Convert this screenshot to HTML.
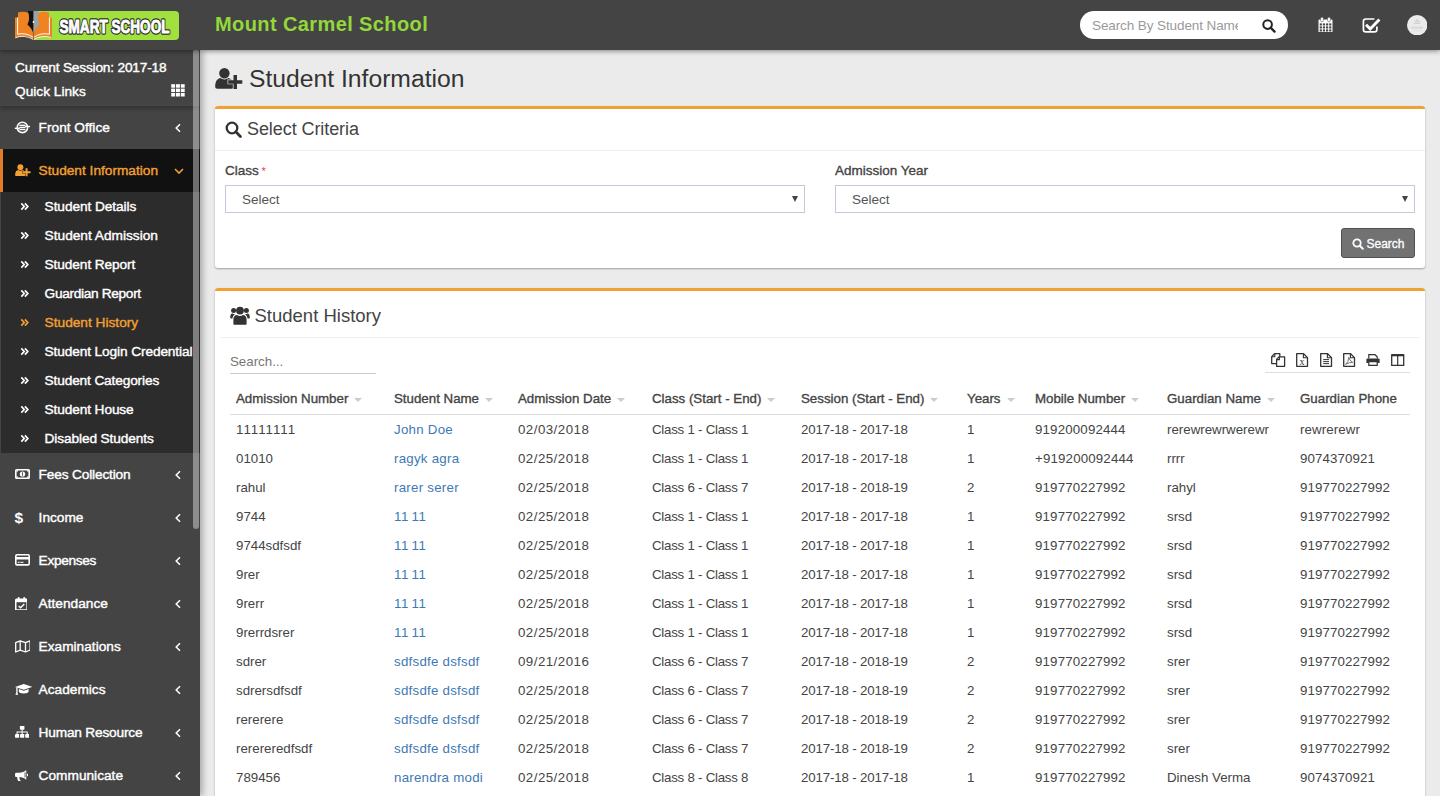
<!DOCTYPE html>
<html lang="en">
<head>
<meta charset="utf-8">
<title>Smart School - Student History</title>
<style>
*{box-sizing:border-box;margin:0;padding:0}
html,body{width:1440px;height:796px;overflow:hidden}
body{font-family:"Liberation Sans",Arial,sans-serif;font-size:14px;color:#333;background:#ebebeb;position:relative}
a{text-decoration:none;color:inherit}
svg{display:block}
/* header */
#hdr{position:absolute;left:0;top:0;width:1440px;height:50px;background:#444;z-index:30;box-shadow:0 1px 5px rgba(0,0,0,.45)}
#logo{position:absolute;left:14px;top:9px}
#school{position:absolute;left:215px;top:12px;font-size:20px;line-height:24px;font-weight:bold;color:#93d83a;letter-spacing:.4px;white-space:nowrap}
#tsearch{position:absolute;left:1080px;top:11px;width:208px;height:28px;background:#fff;border-radius:14px;overflow:hidden}
#tsearch span{position:absolute;left:12px;top:7px;width:146px;overflow:hidden;white-space:nowrap;font-size:13.5px;letter-spacing:-.1px;line-height:16px;color:#9a9a9a}
.hic{position:absolute}
/* sidebar */
#side{position:absolute;left:0;top:50px;width:200px;height:746px;background:#444;z-index:20;box-shadow:3px 0 6px rgba(0,0,0,.27);overflow:hidden}
#sess{position:absolute;left:0;top:0;width:200px;height:56px;background:#444;box-shadow:0 2px 5px rgba(0,0,0,.34);border-bottom:1px solid #484848;z-index:2;color:#fff;font-size:13.7px;-webkit-text-stroke:.4px #fff}
#sess div{position:absolute;left:15px;white-space:nowrap;line-height:16px}
#thumb{position:absolute;left:193px;top:0;width:6px;height:479px;background:rgba(242,242,242,.42);border-radius:2px 2px 4px 4px;z-index:5}
.mi{position:absolute;left:0;width:200px;height:43px;color:#fff;font-size:13.7px;-webkit-text-stroke:.4px currentColor}
.mi .t{position:absolute;left:38.6px;top:14px;line-height:16px;white-space:nowrap}
.mi .ic{position:absolute;left:14px;top:13px}
.mi .ar{position:absolute;left:174px;top:16.5px}
.mi.act{background:#111;border-left:3px solid #e07b28;color:#f2a033}
.mi.act .t{left:35.6px}.mi.act .ic{left:12px;top:15.3px}.mi.act .ar{left:170.5px;top:17.5px}
#sub{position:absolute;left:1px;top:142px;width:199px;height:261px;background:#2c2c2c}
.si{position:absolute;left:-1px;width:200px;height:29px;color:#fff;font-size:13.7px;-webkit-text-stroke:.4px currentColor}
.si .t{position:absolute;left:44.6px;top:7px;line-height:16px;white-space:nowrap}
.si .ch{position:absolute;left:20px;top:10.3px}
.si.on{color:#f2a033}
/* main */
#main{position:absolute;left:0;top:0;width:1440px;height:796px;overflow:hidden}
#ttl{position:absolute;left:249px;top:65px;font-size:24.7px;line-height:28px;color:#333;white-space:nowrap}
#ttlic{position:absolute;left:215px;top:68px}
.box{position:absolute;left:215px;width:1210px;background:#fff;border-radius:3px;box-shadow:0 1px 2px rgba(0,0,0,.32)}
.box .top{position:absolute;left:0;top:0;width:100%;height:3px;background:#f0a133;border-radius:3px 3px 0 0}
.hr{position:absolute;height:1px;background:#f0f0f0}
.abs{position:absolute}
.bh{position:absolute;left:0;top:0;width:100%;border-bottom:1px solid #f1f1f1}
.bh .t{position:absolute;font-size:18px;line-height:22px;color:#444;white-space:nowrap}
.lbl{position:absolute;font-size:13.5px;-webkit-text-stroke:.35px #444;color:#444;line-height:16px;white-space:nowrap}
.sel{position:absolute;width:580px;height:28px;border:1px solid #c3c9dc;background:#fff;font-size:13.5px;color:#555;line-height:28px;padding-left:16px}
.sel i{position:absolute;right:6px;top:10px;width:0;height:0;border-left:3px solid transparent;border-right:3px solid transparent;border-top:6px solid #444}
#sbtn{position:absolute;left:1126px;top:122px;width:74px;height:30px;background:#727272;border:1px solid #505050;border-radius:3px;color:#fff;font-size:12px;-webkit-text-stroke:.3px #fff;line-height:28px}
#sbtn span{position:absolute;left:24.5px;top:1px}
#sbtn svg{position:absolute;left:10px;top:8.5px}
table{position:absolute;left:15px;top:94px;border-collapse:collapse;table-layout:fixed;width:1180px}
th{height:32px;text-align:left;font-size:13.3px;font-weight:normal;-webkit-text-stroke:.35px #444;color:#444;border-bottom:1px solid #ddd;padding:2px 0 0 6px;white-space:nowrap;vertical-align:middle}
th i{display:inline-block;width:0;height:0;border-left:4px solid transparent;border-right:4px solid transparent;border-top:4px solid #ccc;margin-left:6px;vertical-align:1px}
td{height:29px;font-size:13.3px;color:#444;padding:2px 0 0 6px;white-space:nowrap;vertical-align:middle}
td a{color:#4179b5}
.c1,.c2{font-kerning:none}
.c2{letter-spacing:.25px}.c3{letter-spacing:.47px}.c4{letter-spacing:-.25px}.c5{letter-spacing:-.15px}.c7{letter-spacing:.16px}.c9{letter-spacing:.1px}
</style>
</head>
<body>
<div id="hdr">
  <div id="logo"><svg width="170" height="34" viewBox="0 0 170 34">
    <path d="M20 2 H161 Q165 2 165 6 V27 Q165 31 161 31 H20 Z" fill="#a2e03f"/>
    <path d="M1 8.5 L4 8.5 L4 3.4 Q9 2.2 13.5 3.6 Q17.5 5 19.3 8 L19.3 30.6 Q15 27 9 27.2 Q4 27.4 1 29.4 Z" fill="#ef8223"/>
    <path d="M38 8.5 L35 8.5 L35 3.4 Q30 2.2 25.5 3.6 Q21.5 5 19.7 8 L19.7 30.6 Q24 27 30 27.2 Q35 27.4 38 29.4 Z" fill="#ef8223"/>
    <path d="M3.6 8.5 V25.2 Q12 23.4 19 28.2" fill="none" stroke="#fff" stroke-width="1"/>
    <path d="M35.4 8.5 V25.2 Q27 23.4 20 28.2" fill="none" stroke="#fff" stroke-width="1"/>
    <path d="M1.6 28.6 Q10 25.4 19.2 30.4" fill="none" stroke="#fff" stroke-width=".8"/>
    <path d="M37.4 28.6 Q29 25.4 19.8 30.4" fill="none" stroke="#fff" stroke-width=".8"/>
    <path d="M14 2 H19.5 V25 Q18 19 13.4 15.4 Q16.4 10.5 14 2 Z" fill="#111"/>
    <path d="M25 2 H19.5 V25 Q21 19 25.6 15.4 Q22.6 10.5 25 2 Z" fill="#9aa3a3"/>
    <circle cx="19.5" cy="13" r=".9" fill="#fff"/>
    <text x="100.5" y="23.6" text-anchor="middle" textLength="110" lengthAdjust="spacingAndGlyphs" font-family="Liberation Sans, Arial, sans-serif" font-weight="bold" font-size="19" fill="#2d2d2d" stroke="#2d2d2d" stroke-width="3.4" stroke-linejoin="round">SMART SCHOOL</text>
    <text x="100.5" y="23.6" text-anchor="middle" textLength="110" lengthAdjust="spacingAndGlyphs" font-family="Liberation Sans, Arial, sans-serif" font-weight="bold" font-size="19" fill="#fff" stroke="#fff" stroke-width=".9" stroke-linejoin="round">SMART SCHOOL</text>
  </svg></div>
  <div id="school">Mount Carmel School</div>
  <div id="tsearch"><span>Search By Student Name</span></div>
  <svg class="hic" style="left:1262px;top:19px" width="14" height="14" viewBox="0 0 14 14"><circle cx="5.6" cy="5.6" r="4.3" fill="none" stroke="#222" stroke-width="2"/><path d="M8.8 8.8 L12.6 12.6" stroke="#222" stroke-width="2.3" stroke-linecap="round"/></svg>
  <svg class="hic" style="left:1318px;top:16.8px" width="15" height="15.6" viewBox="0 0 15 15.6"><path d="M0.5 3.6 Q0.5 2.6 1.5 2.6 H13.5 Q14.5 2.6 14.5 3.6 V14.4 Q14.5 15.4 13.5 15.4 H1.5 Q0.5 15.4 0.5 14.4 Z" fill="#fff"/><rect x="2.6" y="0.2" width="2.8" height="4.6" rx="1.3" fill="#fff" stroke="#444" stroke-width=".5"/><rect x="9.6" y="0.2" width="2.8" height="4.6" rx="1.3" fill="#fff" stroke="#444" stroke-width=".5"/><g fill="#444"><rect x="1.7" y="6.4" width="2.2" height="2.1"/><rect x="4.85" y="6.4" width="2.2" height="2.1"/><rect x="8" y="6.4" width="2.2" height="2.1"/><rect x="11.15" y="6.4" width="2.2" height="2.1"/><rect x="1.7" y="9.4" width="2.2" height="2.1"/><rect x="4.85" y="9.4" width="2.2" height="2.1"/><rect x="8" y="9.4" width="2.2" height="2.1"/><rect x="11.15" y="9.4" width="2.2" height="2.1"/><rect x="1.7" y="12.4" width="2.2" height="2.1"/><rect x="4.85" y="12.4" width="2.2" height="2.1"/><rect x="8" y="12.4" width="2.2" height="2.1"/><rect x="11.15" y="12.4" width="2.2" height="2.1"/></g></svg>
  <svg class="hic" style="left:1361.5px;top:16.5px" width="19" height="16.5" viewBox="0 0 19 16.5"><path d="M14.9 9.4 V12.4 Q14.9 14.8 12.5 14.8 H3.8 Q1.4 14.8 1.4 12.4 V4.4 Q1.4 2 3.8 2 H12.4" fill="none" stroke="#fff" stroke-width="1.7"/><path d="M4 7.8 L8.2 11.9 L17.4 2.6" fill="none" stroke="#fff" stroke-width="2.9"/></svg>
  <svg class="hic" style="left:1407px;top:15px" width="20.4" height="20.4" viewBox="0 0 20.4 20.4"><circle cx="10.2" cy="10.2" r="10.2" fill="#ebebeb"/><circle cx="10.2" cy="5.6" r="1.3" fill="#d2d2d2"/><circle cx="8" cy="6.4" r="1" fill="#d8d8d8"/><circle cx="12.4" cy="6.4" r="1" fill="#d8d8d8"/><path d="M6.2 9 Q10.2 5.6 14.2 9 Z" fill="#d2d2d2"/><rect x="4.4" y="11.6" width="11.6" height="2.2" fill="#dadada"/><rect x="6.2" y="15.4" width="8" height=".7" fill="#dcdcdc"/></svg>
</div>
<div id="side">
  <div id="sess"><div style="top:10px;letter-spacing:-.19px">Current Session: 2017-18</div><div style="top:34px">Quick Links</div><svg style="position:absolute;left:171px;top:34px" width="14" height="13" viewBox="0 0 14 13"><g fill="#fff"><rect x="0.2" y="0.2" width="3.9" height="3.5"/><rect x="5" y="0.2" width="3.9" height="3.5"/><rect x="9.8" y="0.2" width="3.9" height="3.5"/><rect x="0.2" y="4.6" width="3.9" height="3.5"/><rect x="5" y="4.6" width="3.9" height="3.5"/><rect x="9.8" y="4.6" width="3.9" height="3.5"/><rect x="0.2" y="9" width="3.9" height="3.5"/><rect x="5" y="9" width="3.9" height="3.5"/><rect x="9.8" y="9" width="3.9" height="3.5"/></g></svg></div>
  <div class="mi" style="top:56px"><span class="ic"><svg width="16" height="16" viewBox="0 0 16 16"><circle cx="8.4" cy="8.4" r="5.2" fill="none" stroke="#fff" stroke-width="1.6"/><rect x="0.8" y="8.6" width="5" height="1.4" fill="#fff"/><rect x="11" y="6.8" width="5" height="1.4" fill="#fff"/><rect x="5.4" y="5.6" width="6" height="1.4" fill="#fff"/><rect x="5.4" y="7.7" width="6" height="1.4" fill="#fff"/><rect x="5.4" y="9.8" width="6" height="1.4" fill="#fff"/></svg></span><span class="t">Front Office</span><span class="ar"><svg width="8" height="10" viewBox="0 0 8 10"><path d="M6 1.2 L2.2 5 L6 8.8" fill="none" stroke="#fff" stroke-width="1.5"/></svg></span></div>
  <div class="mi act" style="top:99px"><span class="ic"><svg width="16" height="13" viewBox="0 0 28 22"><circle cx="9.4" cy="5.2" r="5.2" fill="#f2a033"/><path d="M0.2 18.8 C0.2 13 2.6 10.4 5.6 10 C6.8 11 8 11.4 9.4 11.4 C10.8 11.4 12 11 13.2 10 C16.2 10.4 18.6 13 18.6 18.8 C18.6 20 17.8 20.8 16.6 20.8 H2.2 C1 20.8 0.2 20 0.2 18.8 Z" fill="#f2a033"/><path d="M18.5 7 h3.5 v5.2 h5.3 v3.5 h-5.3 v5.3 h-3.5 v-5.3 h-5.3 v-3.5 h5.3 Z" fill="#f2a033" stroke="#111" stroke-width="1.3" paint-order="stroke"/></svg></span><span class="t">Student Information</span><span class="ar"><svg width="10" height="8" viewBox="0 0 10 8"><path d="M1 2 L5 6 L9 2" fill="none" stroke="#f2a033" stroke-width="1.6"/></svg></span></div>
  <div id="sub">
    <div class="si" style="top:0px"><span class="ch"><svg width="9" height="9" viewBox="0 0 9 9"><path d="M1.3 1.4 L4.2 4.5 L1.3 7.6 M4.9 1.4 L7.8 4.5 L4.9 7.6" fill="none" stroke="#fff" stroke-width="1.7"/></svg></span><span class="t" style="letter-spacing:-.08px">Student Details</span></div>
    <div class="si" style="top:29px"><span class="ch"><svg width="9" height="9" viewBox="0 0 9 9"><path d="M1.3 1.4 L4.2 4.5 L1.3 7.6 M4.9 1.4 L7.8 4.5 L4.9 7.6" fill="none" stroke="#fff" stroke-width="1.7"/></svg></span><span class="t">Student Admission</span></div>
    <div class="si" style="top:58px"><span class="ch"><svg width="9" height="9" viewBox="0 0 9 9"><path d="M1.3 1.4 L4.2 4.5 L1.3 7.6 M4.9 1.4 L7.8 4.5 L4.9 7.6" fill="none" stroke="#fff" stroke-width="1.7"/></svg></span><span class="t" style="letter-spacing:-.1px">Student Report</span></div>
    <div class="si" style="top:87px"><span class="ch"><svg width="9" height="9" viewBox="0 0 9 9"><path d="M1.3 1.4 L4.2 4.5 L1.3 7.6 M4.9 1.4 L7.8 4.5 L4.9 7.6" fill="none" stroke="#fff" stroke-width="1.7"/></svg></span><span class="t" style="letter-spacing:-.33px">Guardian Report</span></div>
    <div class="si on" style="top:116px"><span class="ch"><svg width="9" height="9" viewBox="0 0 9 9"><path d="M1.3 1.4 L4.2 4.5 L1.3 7.6 M4.9 1.4 L7.8 4.5 L4.9 7.6" fill="none" stroke="#f2a033" stroke-width="1.7"/></svg></span><span class="t">Student History</span></div>
    <div class="si" style="top:145px"><span class="ch"><svg width="9" height="9" viewBox="0 0 9 9"><path d="M1.3 1.4 L4.2 4.5 L1.3 7.6 M4.9 1.4 L7.8 4.5 L4.9 7.6" fill="none" stroke="#fff" stroke-width="1.7"/></svg></span><span class="t" style="letter-spacing:-.12px">Student Login Credential</span></div>
    <div class="si" style="top:174px"><span class="ch"><svg width="9" height="9" viewBox="0 0 9 9"><path d="M1.3 1.4 L4.2 4.5 L1.3 7.6 M4.9 1.4 L7.8 4.5 L4.9 7.6" fill="none" stroke="#fff" stroke-width="1.7"/></svg></span><span class="t" style="letter-spacing:-.15px">Student Categories</span></div>
    <div class="si" style="top:203px"><span class="ch"><svg width="9" height="9" viewBox="0 0 9 9"><path d="M1.3 1.4 L4.2 4.5 L1.3 7.6 M4.9 1.4 L7.8 4.5 L4.9 7.6" fill="none" stroke="#fff" stroke-width="1.7"/></svg></span><span class="t" style="letter-spacing:-.12px">Student House</span></div>
    <div class="si" style="top:232px"><span class="ch"><svg width="9" height="9" viewBox="0 0 9 9"><path d="M1.3 1.4 L4.2 4.5 L1.3 7.6 M4.9 1.4 L7.8 4.5 L4.9 7.6" fill="none" stroke="#fff" stroke-width="1.7"/></svg></span><span class="t" style="letter-spacing:-.12px">Disabled Students</span></div>
  </div>
  <div class="mi" style="top:403px"><svg class="abs" style="left:14.5px;top:16px" width="15" height="10" viewBox="0 0 15 10"><rect x="0.8" y="0.8" width="13.4" height="8.4" rx=".8" fill="none" stroke="#fff" stroke-width="1.6"/><ellipse cx="7.5" cy="5" rx="2.7" ry="2.6" fill="#fff"/><rect x="7.05" y="3.3" width=".9" height="3.4" fill="#444"/><rect x="1.4" y="1.4" width="1.6" height="1.2" fill="#fff"/><rect x="12" y="1.4" width="1.6" height="1.2" fill="#fff"/><rect x="1.4" y="7.4" width="1.6" height="1.2" fill="#fff"/><rect x="12" y="7.4" width="1.6" height="1.2" fill="#fff"/></svg><span class="t" style="letter-spacing:-0.16px">Fees Collection</span><span class="ar"><svg width="8" height="10" viewBox="0 0 8 10"><path d="M6 1.2 L2.2 5 L6 8.8" fill="none" stroke="#fff" stroke-width="1.5"/></svg></span></div>
  <div class="mi" style="top:446px"><svg class="abs" style="left:14px;top:13px" width="11" height="17" viewBox="0 0 11 17"><text x="0.6" y="13.6" font-family="Liberation Sans, sans-serif" font-weight="bold" font-size="15.5" fill="#fff">$</text></svg><span class="t">Income</span><span class="ar"><svg width="8" height="10" viewBox="0 0 8 10"><path d="M6 1.2 L2.2 5 L6 8.8" fill="none" stroke="#fff" stroke-width="1.5"/></svg></span></div>
  <div class="mi" style="top:489px"><svg class="abs" style="left:14.5px;top:15.4px" width="15" height="11.7" viewBox="0 0 15 11.7"><rect x="0.8" y="0.8" width="13.4" height="10.1" rx="1.2" fill="none" stroke="#fff" stroke-width="1.6"/><rect x="1" y="3" width="13" height="2.5" fill="#fff"/><rect x="2.8" y="7.8" width="1.8" height="1.1" fill="#fff"/><rect x="5.4" y="7.8" width="3" height="1.1" fill="#fff"/></svg><span class="t" style="letter-spacing:-0.33px">Expenses</span><span class="ar"><svg width="8" height="10" viewBox="0 0 8 10"><path d="M6 1.2 L2.2 5 L6 8.8" fill="none" stroke="#fff" stroke-width="1.5"/></svg></span></div>
  <div class="mi" style="top:532px"><svg class="abs" style="left:14.5px;top:14.5px" width="12.9" height="13.8" viewBox="0 0 12.9 13.8"><rect x="0.75" y="2.2" width="11.4" height="10.85" rx=".8" fill="none" stroke="#fff" stroke-width="1.5"/><rect x="0.75" y="2.2" width="11.4" height="3" fill="#fff"/><rect x="2.7" y="0" width="1.9" height="3.8" rx=".9" fill="#fff"/><rect x="8.3" y="0" width="1.9" height="3.8" rx=".9" fill="#fff"/><path d="M3.6 8.9 L5.6 10.8 L9.3 7" fill="none" stroke="#fff" stroke-width="1.4"/></svg><span class="t">Attendance</span><span class="ar"><svg width="8" height="10" viewBox="0 0 8 10"><path d="M6 1.2 L2.2 5 L6 8.8" fill="none" stroke="#fff" stroke-width="1.5"/></svg></span></div>
  <div class="mi" style="top:575px"><svg class="abs" style="left:14.5px;top:14.9px" width="15.8" height="12.8" viewBox="0 0 15.8 12.8"><path d="M0.7 2.7 L5.2 0.8 L10.5 2.7 L15.1 0.8 V10.1 L10.5 12 L5.2 10.1 L0.7 12 Z M5.2 0.8 V10.1 M10.5 2.7 V12" fill="none" stroke="#fff" stroke-width="1.3" stroke-linejoin="round"/></svg><span class="t">Examinations</span><span class="ar"><svg width="8" height="10" viewBox="0 0 8 10"><path d="M6 1.2 L2.2 5 L6 8.8" fill="none" stroke="#fff" stroke-width="1.5"/></svg></span></div>
  <div class="mi" style="top:618px"><svg class="abs" style="left:14.5px;top:15.7px" width="17.5" height="11.2" viewBox="0.4 2 17.2 12.4" preserveAspectRatio="none"><path d="M9 2 L17.6 5.2 L9 8.4 L0.4 5.2 Z" fill="#fff"/><path d="M4.2 7.6 L9 9.5 L13.8 7.6 V10.2 C13.8 11.6 11.6 12.4 9 12.4 C6.4 12.4 4.2 11.6 4.2 10.2 Z" fill="#fff"/><path d="M2 5.8 V11 L1.2 14 H3 L2.6 11 V6" fill="#fff" stroke="#fff" stroke-width=".6"/></svg><span class="t">Academics</span><span class="ar"><svg width="8" height="10" viewBox="0 0 8 10"><path d="M6 1.2 L2.2 5 L6 8.8" fill="none" stroke="#fff" stroke-width="1.5"/></svg></span></div>
  <div class="mi" style="top:661px"><svg class="abs" style="left:14.5px;top:15.4px" width="14.3" height="11.8" viewBox="0.4 1.4 15.2 13.2" preserveAspectRatio="none"><rect x="5.6" y="1.4" width="4.8" height="4.2" rx=".5" fill="#fff"/><rect x="0.4" y="10.4" width="4.4" height="4.2" rx=".5" fill="#fff"/><rect x="5.8" y="10.4" width="4.4" height="4.2" rx=".5" fill="#fff"/><rect x="11.2" y="10.4" width="4.4" height="4.2" rx=".5" fill="#fff"/><path d="M8 5 V10.6 M2.6 10.6 V8 H13.4 V10.6" fill="none" stroke="#fff" stroke-width="1.1"/></svg><span class="t" style="letter-spacing:-0.2px">Human Resource</span><span class="ar"><svg width="8" height="10" viewBox="0 0 8 10"><path d="M6 1.2 L2.2 5 L6 8.8" fill="none" stroke="#fff" stroke-width="1.5"/></svg></span></div>
  <div class="mi" style="top:704px"><svg class="abs" style="left:14.5px;top:15.6px" width="13.7" height="11.7" viewBox="0.6 1.2 15.8 13.8" preserveAspectRatio="none"><path d="M13.6 1.2 C11.4 3.4 8.6 4.4 5.4 4.4 H2.2 C1.3 4.4 0.6 5.1 0.6 6 V8 C0.6 8.9 1.3 9.6 2.2 9.6 H5.4 C8.6 9.6 11.4 10.6 13.6 12.8 Z" fill="#fff"/><path d="M3.2 9.6 H5.8 C5.6 11.4 6.2 12.8 7.4 14 C6.8 14.9 5.4 15 4.4 14.4 C3.6 12.9 3 11.4 3.2 9.6 Z" fill="#fff"/><path d="M14.4 5.4 C15.6 5.6 16.4 6.2 16.4 7 C16.4 7.8 15.6 8.4 14.4 8.6 Z" fill="#fff"/><path d="M12.2 4 V10" stroke="#444" stroke-width="1"/></svg><span class="t">Communicate</span><span class="ar"><svg width="8" height="10" viewBox="0 0 8 10"><path d="M6 1.2 L2.2 5 L6 8.8" fill="none" stroke="#fff" stroke-width="1.5"/></svg></span></div>
  <div id="thumb"></div>
</div>
<div id="main">
  <div id="ttlic"><svg width="28" height="22" viewBox="0 0 28 22"><circle cx="9.4" cy="5.2" r="5.2" fill="#333"/><path d="M0.2 18.8 C0.2 13 2.6 10.4 5.6 10 C6.8 11 8 11.4 9.4 11.4 C10.8 11.4 12 11 13.2 10 C16.2 10.4 18.6 13 18.6 18.8 C18.6 20 17.8 20.8 16.6 20.8 H2.2 C1 20.8 0.2 20 0.2 18.8 Z" fill="#333"/><path d="M18.5 7 h3.5 v5.2 h5.3 v3.5 h-5.3 v5.3 h-3.5 v-5.3 h-5.3 v-3.5 h5.3 Z" fill="#333" stroke="#ebebeb" stroke-width="1.3" paint-order="stroke"/></svg></div>
  <div id="ttl">Student Information</div>

  <div class="box" style="top:106px;height:162px">
    <div class="top"></div>
    <svg class="abs" style="left:10px;top:15px" width="17" height="17" viewBox="0 0 17 17"><circle cx="7" cy="7" r="5.3" fill="none" stroke="#333" stroke-width="2.3"/><path d="M10.8 10.8 L15.4 15.4" stroke="#333" stroke-width="2.8" stroke-linecap="round"/></svg>
    <div class="abs" style="left:32px;top:12px;font-size:18px;line-height:22px;color:#444;white-space:nowrap;letter-spacing:-.08px">Select Criteria</div>
    <div class="hr" style="left:0;top:44px;width:1210px"></div>
    <div class="lbl" style="left:10px;top:57px">Class <span style="color:#e8384f;-webkit-text-stroke:0;font-size:11px;position:relative;top:0;left:-1px">*</span></div>
    <div class="lbl" style="left:620px;top:57px">Admission Year</div>
    <div class="sel" style="left:10px;top:79px">Select<i></i></div>
    <div class="sel" style="left:620px;top:79px">Select<i></i></div>
    <div id="sbtn"><svg width="12" height="12" viewBox="0 0 12 12"><circle cx="5" cy="5" r="3.7" fill="none" stroke="#fff" stroke-width="1.8"/><path d="M7.8 7.8 L10.8 10.8" stroke="#fff" stroke-width="2" stroke-linecap="round"/></svg><span>Search</span></div>
  </div>

  <div class="box" style="top:288px;height:520px">
    <div class="top"></div>
    <svg class="abs" style="left:15px;top:18px" width="20" height="19" viewBox="0 0 20 19"><circle cx="10" cy="4.6" r="3.9" fill="#333"/><circle cx="3.6" cy="4.4" r="2.5" fill="#333"/><circle cx="16.4" cy="4.4" r="2.5" fill="#333"/><path d="M3.4 17.8 V13.6 C3.4 10.6 5 9 7 9 C7.8 9.7 8.8 10.1 10 10.1 C11.2 10.1 12.2 9.7 13 9 C15 9 16.6 10.6 16.6 13.6 V17.8 C16.6 18.4 16.2 18.8 15.6 18.8 H4.4 C3.8 18.8 3.4 18.4 3.4 17.8 Z" fill="#333"/><path d="M0.2 11.6 C0.2 8.8 1.2 7.6 2.4 7.6 C3.2 8.2 4.2 8.4 5.2 8.2 C3.6 9.2 2.6 10.6 2.4 12.4 H1 C0.5 12.4 0.2 12.1 0.2 11.6 Z" fill="#333"/><path d="M19.8 11.6 C19.8 8.8 18.8 7.6 17.6 7.6 C16.8 8.2 15.8 8.4 14.8 8.2 C16.4 9.2 17.4 10.6 17.6 12.4 H19 C19.5 12.4 19.8 12.1 19.8 11.6 Z" fill="#333"/></svg>
    <div class="abs" style="left:39.5px;top:16.8px;font-size:18.5px;line-height:22px;color:#444;white-space:nowrap">Student History</div>
    <div class="hr" style="left:5px;top:49px;width:1200px"></div>
    <div class="abs" style="left:15px;top:66px;font-size:13.3px;line-height:16px;color:#777;white-space:nowrap">Search...</div>
    <div class="abs" style="left:15px;top:85px;width:146px;height:1px;background:#ccc"></div>
    <div class="abs" style="left:1050px;top:84px;width:145px;height:1px;background:#ddd"></div>
    <div id="exp" class="abs" style="left:1000px;top:0">
    <svg class="abs" style="left:55.8px;top:65px" width="15" height="14" viewBox="0 0 15 14"><path d="M3.6 0.7 H8.8 V10.6 H0.7 V3.6 Z" fill="#fff" stroke="#333" stroke-width="1.3" stroke-linejoin="round"/><path d="M3.8 0.9 V3.8 H0.9" fill="none" stroke="#333" stroke-width="1.1"/><path d="M8.2 3.8 H13.6 V13.3 H5.6 V6.4 Z" fill="#fff" stroke="#333" stroke-width="1.3" stroke-linejoin="round"/><path d="M8.4 4 V6.6 H5.8" fill="none" stroke="#333" stroke-width="1.1"/></svg>
    <svg class="abs" style="left:81px;top:65px" width="13" height="14" viewBox="0 0 13 14"><path d="M0.7 0.7 H7.6 L11.5 4.6 V13.3 H0.7 Z" fill="#fff" stroke="#333" stroke-width="1.3" stroke-linejoin="round"/><path d="M7.4 0.9 V4.8 H11.3" fill="none" stroke="#333" stroke-width="1.1"/><text x="6" y="11.6" text-anchor="middle" font-family="Liberation Serif, serif" font-size="10" fill="#333">x</text></svg>
    <svg class="abs" style="left:104.6px;top:65px" width="13" height="14" viewBox="0 0 13 14"><path d="M0.7 0.7 H7.6 L11.5 4.6 V13.3 H0.7 Z" fill="#fff" stroke="#333" stroke-width="1.3" stroke-linejoin="round"/><path d="M7.4 0.9 V4.8 H11.3" fill="none" stroke="#333" stroke-width="1.1"/><path d="M3.2 6.6 H9 M3.2 8.6 H9 M3.2 10.6 H9" stroke="#333" stroke-width="1"/></svg>
    <svg class="abs" style="left:127.8px;top:65px" width="13" height="14" viewBox="0 0 13 14"><path d="M0.7 0.7 H7.6 L11.5 4.6 V13.3 H0.7 Z" fill="#fff" stroke="#333" stroke-width="1.3" stroke-linejoin="round"/><path d="M7.4 0.9 V4.8 H11.3" fill="none" stroke="#333" stroke-width="1.1"/><path d="M2.6 11.4 Q5.4 9.4 5.8 4.4 Q6.2 7.6 9.8 9.4 Q6 9.2 2.6 11.4 Z" fill="none" stroke="#555" stroke-width=".8"/></svg>
    <svg class="abs" style="left:151px;top:66px" width="14" height="12" viewBox="0 0 14 12"><path d="M2.8 4.6 V0.7 H9 L11.2 2.8 V4.6" fill="#fff" stroke="#333" stroke-width="1.2"/><path d="M1.4 4.4 H12.6 Q13.6 4.4 13.6 5.4 V9 H0.4 V5.4 Q0.4 4.4 1.4 4.4 Z" fill="#333"/><path d="M2.8 7.6 H11.2 V11.3 H2.8 Z" fill="#fff" stroke="#333" stroke-width="1.2"/></svg>
    <svg class="abs" style="left:175.5px;top:66px" width="14" height="12" viewBox="0 0 14 12"><path d="M0.7 1 H12.7 V11.3 H0.7 Z" fill="#fff" stroke="#333" stroke-width="1.3"/><path d="M0.7 1.2 H12.7" stroke="#333" stroke-width="2.2"/><path d="M6.7 1 V11.3" stroke="#333" stroke-width="1.2"/></svg>
    </div>
    <table>
      <colgroup><col style="width:158px"><col style="width:124px"><col style="width:134px"><col style="width:149px"><col style="width:166px"><col style="width:68px"><col style="width:132px"><col style="width:133px"><col style="width:116px"></colgroup>
      <thead><tr><th>Admission Number<i></i></th><th>Student Name<i></i></th><th>Admission Date<i></i></th><th>Class (Start - End)<i></i></th><th>Session (Start - End)<i></i></th><th>Years<i></i></th><th>Mobile Number<i></i></th><th>Guardian Name<i></i></th><th>Guardian Phone</th></tr></thead>
      <tbody>
        <tr><td class="c1">11111111</td><td class="c2"><a>John Doe</a></td><td class="c3">02/03/2018</td><td class="c4">Class 1 - Class 1</td><td class="c5">2017-18 - 2017-18</td><td class="c6">1</td><td class="c7">919200092444</td><td class="c8">rerewrewrwerewr</td><td class="c9">rewrerewr</td></tr>
        <tr><td class="c1">01010</td><td class="c2"><a>ragyk agra</a></td><td class="c3">02/25/2018</td><td class="c4">Class 1 - Class 1</td><td class="c5">2017-18 - 2017-18</td><td class="c6">1</td><td class="c7">+919200092444</td><td class="c8">rrrr</td><td class="c9">9074370921</td></tr>
        <tr><td class="c1">rahul</td><td class="c2"><a>rarer serer</a></td><td class="c3">02/25/2018</td><td class="c4">Class 6 - Class 7</td><td class="c5">2017-18 - 2018-19</td><td class="c6">2</td><td class="c7">919770227992</td><td class="c8">rahyl</td><td class="c9">919770227992</td></tr>
        <tr><td class="c1">9744</td><td class="c2" style="letter-spacing:-.35px"><a>11 11</a></td><td class="c3">02/25/2018</td><td class="c4">Class 1 - Class 1</td><td class="c5">2017-18 - 2017-18</td><td class="c6">1</td><td class="c7">919770227992</td><td class="c8">srsd</td><td class="c9">919770227992</td></tr>
        <tr><td class="c1">9744sdfsdf</td><td class="c2" style="letter-spacing:-.35px"><a>11 11</a></td><td class="c3">02/25/2018</td><td class="c4">Class 1 - Class 1</td><td class="c5">2017-18 - 2017-18</td><td class="c6">1</td><td class="c7">919770227992</td><td class="c8">srsd</td><td class="c9">919770227992</td></tr>
        <tr><td class="c1">9rer</td><td class="c2" style="letter-spacing:-.35px"><a>11 11</a></td><td class="c3">02/25/2018</td><td class="c4">Class 1 - Class 1</td><td class="c5">2017-18 - 2017-18</td><td class="c6">1</td><td class="c7">919770227992</td><td class="c8">srsd</td><td class="c9">919770227992</td></tr>
        <tr><td class="c1">9rerr</td><td class="c2" style="letter-spacing:-.35px"><a>11 11</a></td><td class="c3">02/25/2018</td><td class="c4">Class 1 - Class 1</td><td class="c5">2017-18 - 2017-18</td><td class="c6">1</td><td class="c7">919770227992</td><td class="c8">srsd</td><td class="c9">919770227992</td></tr>
        <tr><td class="c1">9rerrdsrer</td><td class="c2" style="letter-spacing:-.35px"><a>11 11</a></td><td class="c3">02/25/2018</td><td class="c4">Class 1 - Class 1</td><td class="c5">2017-18 - 2017-18</td><td class="c6">1</td><td class="c7">919770227992</td><td class="c8">srsd</td><td class="c9">919770227992</td></tr>
        <tr><td class="c1">sdrer</td><td class="c2"><a>sdfsdfe dsfsdf</a></td><td class="c3">09/21/2016</td><td class="c4">Class 6 - Class 7</td><td class="c5">2017-18 - 2018-19</td><td class="c6">2</td><td class="c7">919770227992</td><td class="c8">srer</td><td class="c9">919770227992</td></tr>
        <tr><td class="c1">sdrersdfsdf</td><td class="c2"><a>sdfsdfe dsfsdf</a></td><td class="c3">02/25/2018</td><td class="c4">Class 6 - Class 7</td><td class="c5">2017-18 - 2018-19</td><td class="c6">2</td><td class="c7">919770227992</td><td class="c8">srer</td><td class="c9">919770227992</td></tr>
        <tr><td class="c1">rererere</td><td class="c2"><a>sdfsdfe dsfsdf</a></td><td class="c3">02/25/2018</td><td class="c4">Class 6 - Class 7</td><td class="c5">2017-18 - 2018-19</td><td class="c6">2</td><td class="c7">919770227992</td><td class="c8">srer</td><td class="c9">919770227992</td></tr>
        <tr><td class="c1">rerereredfsdf</td><td class="c2"><a>sdfsdfe dsfsdf</a></td><td class="c3">02/25/2018</td><td class="c4">Class 6 - Class 7</td><td class="c5">2017-18 - 2018-19</td><td class="c6">2</td><td class="c7">919770227992</td><td class="c8">srer</td><td class="c9">919770227992</td></tr>
        <tr><td class="c1">789456</td><td class="c2"><a>narendra modi</a></td><td class="c3">02/25/2018</td><td class="c4">Class 8 - Class 8</td><td class="c5">2017-18 - 2017-18</td><td class="c6">1</td><td class="c7">919770227992</td><td class="c8">Dinesh Verma</td><td class="c9">9074370921</td></tr>
      </tbody>
    </table>
  </div>
</div>
</body>
</html>
